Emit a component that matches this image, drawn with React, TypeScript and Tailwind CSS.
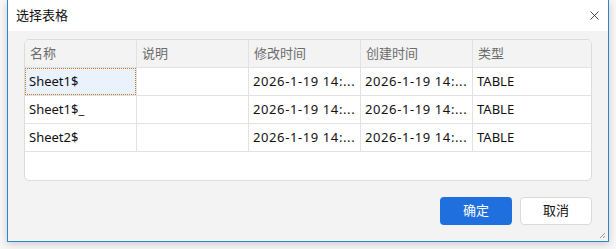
import { X } from "lucide-react";

const cols = ["名称", "说明", "修改时间", "创建时间", "类型"];
const widths = ["w-[112px]", "w-[112px]", "w-[112px]", "w-[112px]", "flex-1"];

const rows = [
  ["Sheet1$", "", "2026-1-19 14:...", "2026-1-19 14:...", "TABLE"],
  ["Sheet1$_", "", "2026-1-19 14:...", "2026-1-19 14:...", "TABLE"],
  ["Sheet2$", "", "2026-1-19 14:...", "2026-1-19 14:...", "TABLE"],
];

const font = { fontFamily: '"Noto Sans", "Noto Sans CJK SC", sans-serif' };

export default function App() {
  return (
    <div className="w-[616px] h-[249px] bg-[#f7f7f7] pl-[7px] overflow-hidden" style={font}>
      <div className="w-[602px] h-[242px] border border-t-0 border-[#2b86cc] bg-[#f3f3f3] flex flex-col shadow-[0_2px_8px_rgba(0,0,0,0.18)]">
        <div className="h-[31px] bg-white flex items-center justify-between pl-[8px] pr-[6px] shrink-0">
          <span className="text-[13px] text-[#111]">选择表格</span>
          <X className="w-[15px] h-[15px] text-[#222]" strokeWidth={1.3} />
        </div>

        <div className="flex-1 flex flex-col px-[16px] pt-[8px] relative">
          <div className="h-[142px] bg-white border border-[#dcdcdc] rounded-[5px] overflow-hidden">
            <div className="flex h-[28px] bg-[#f3f3f3] border-b border-[#e2e2e2]">
              {cols.map((c, i) => (
                <div
                  key={c}
                  className={`${widths[i]} ${i < 4 ? "border-r border-[#e2e2e2]" : ""} flex items-center pl-[5px] text-[13px] text-[#6b6b6b]`}
                >
                  {c}
                </div>
              ))}
            </div>
            {rows.map((r, ri) => (
              <div key={ri} className="flex h-[28px] border-b border-[#e2e2e2]">
                {r.map((v, i) => (
                  <div
                    key={i}
                    className={`${widths[i]} ${i < 4 ? "border-r border-[#e2e2e2]" : ""} flex items-center text-[13px] text-[#111] whitespace-nowrap`}
                  >
                    {ri === 0 && i === 0 ? (
                      <div className="w-full h-full bg-[#e9f2fd] border border-dotted border-[#c07a2a] flex items-center pl-[3px]">
                        {v}
                      </div>
                    ) : (
                      <span className={`pl-[4px] ${i === 2 || i === 3 ? "tracking-[0.6px]" : ""}`}>{v}</span>
                    )}
                  </div>
                ))}
              </div>
            ))}
          </div>

          <div className="flex justify-end gap-[8px] mt-[16px]">
            <button className="w-[72px] h-[28px] rounded-[4px] bg-[#1f6fde] text-white text-[13px]">确定</button>
            <button className="w-[72px] h-[28px] rounded-[4px] bg-white border border-[#dadada] text-[#111] text-[13px]">取消</button>
          </div>

          <svg className="absolute right-[2px] bottom-[2px]" width="8" height="8" viewBox="0 0 8 8">
            <path d="M7 2 L2 7 M7 5 L5 7" stroke="#999" strokeWidth="1" />
          </svg>
        </div>
      </div>
    </div>
  );
}
